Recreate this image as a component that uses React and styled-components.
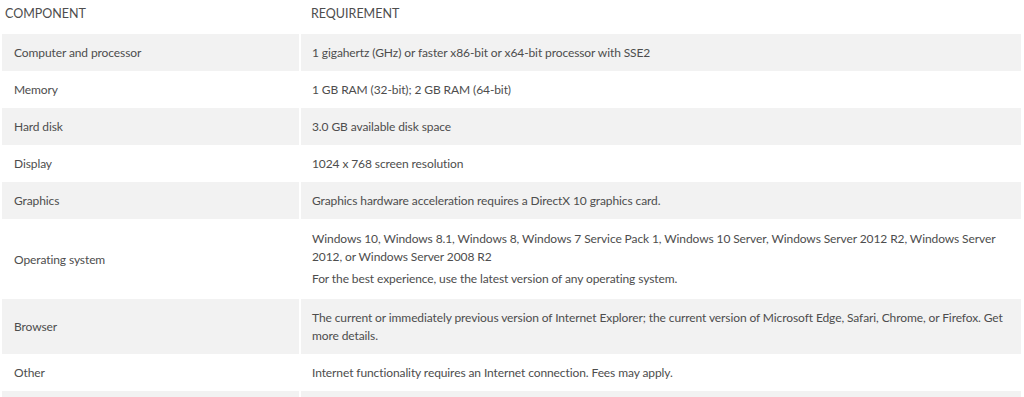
import React from 'react';
import styled, { createGlobalStyle } from 'styled-components';

const GlobalStyle = createGlobalStyle`
  body {
    margin: 0;
    background: #fff;
    font-family: Lato, "Open Sans", sans-serif;
    color: #4d4d4d;
  }
`;

const Table = styled.table`
  width: 1019px;
  margin-left: 2px;
  border-collapse: collapse;
  table-layout: fixed;
  font-size: 12px;
  letter-spacing: -0.1px;
  line-height: 18px;

  th,
  td {
    box-sizing: border-box;
  }
`;

const HeadCell = styled.th`
  text-align: left;
  font-weight: 400;
  text-transform: uppercase;
  font-size: 12.5px;
  letter-spacing: 0;
  color: #4d4d4d;
  padding: 5px 13px 11px ${(p) => (p.first ? '3px' : '11px')};
  width: ${(p) => (p.first ? '298px' : 'auto')};
`;

const Row = styled.tr`
  background: ${(p) => (p.striped ? '#f2f2f2' : '#fff')};
`;

const Cell = styled.td`
  vertical-align: middle;
  padding: ${(p) => (p.tall ? '11px' : '10px')} 13px ${(p) => (p.tall ? '11px' : '9px')} 12px;
  & + & {
    border-left: 2px solid #fff;
    padding-left: 11px;
  }
`;

const Para = styled.p`
  margin: 0;
  & + & {
    margin-top: 4px;
  }
`;

const rows = [
  ['Computer and processor', ['1 gigahertz (GHz) or faster x86-bit or x64-bit processor with SSE2']],
  ['Memory', ['1 GB RAM (32-bit); 2 GB RAM (64-bit)']],
  ['Hard disk', ['3.0 GB available disk space']],
  ['Display', ['1024 x 768 screen resolution']],
  ['Graphics', ['Graphics hardware acceleration requires a DirectX 10 graphics card.']],
  [
    'Operating system',
    [
      'Windows 10, Windows 8.1, Windows 8, Windows 7 Service Pack 1, Windows 10 Server, Windows Server 2012 R2, Windows Server 2012, or Windows Server 2008 R2',
      'For the best experience, use the latest version of any operating system.',
    ],
  ],
  [
    'Browser',
    [
      'The current or immediately previous version of Internet Explorer; the current version of Microsoft Edge, Safari, Chrome, or Firefox. Get more details.',
    ],
  ],
  ['Other', ['Internet functionality requires an Internet connection. Fees may apply.']],
  ['\u00a0', ['\u00a0']],
];

const App = () => {
  return (
    <>
      <GlobalStyle />
      <Table>
        <thead>
          <tr>
            <HeadCell first>Component</HeadCell>
            <HeadCell>Requirement</HeadCell>
          </tr>
        </thead>
        <tbody>
          {rows.map(([name, paras], i) => (
            <Row key={i} striped={i % 2 === 0}>
              <Cell>{name}</Cell>
              <Cell tall={paras.length > 1}>
                {paras.map((t, j) => (
                  <Para key={j}>{t}</Para>
                ))}
              </Cell>
            </Row>
          ))}
        </tbody>
      </Table>
    </>
  );
};

export default App;
